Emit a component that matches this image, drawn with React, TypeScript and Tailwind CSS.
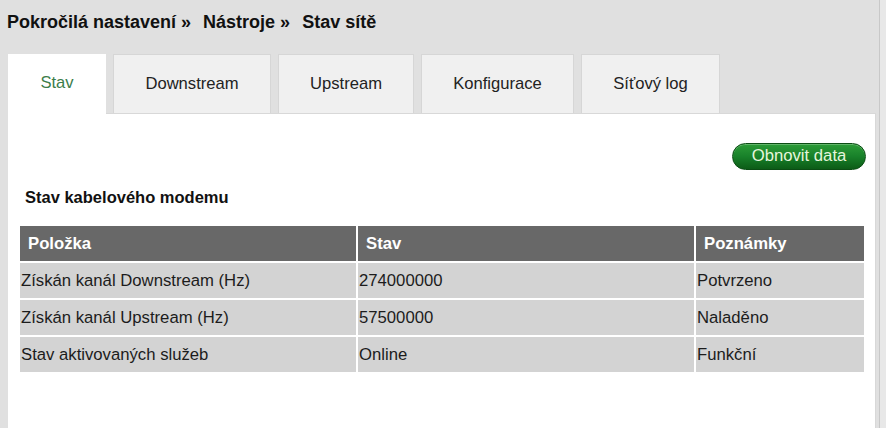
import React from "react"

const tabs = [
  { name: "Stav", width: "w-[98px]", active: true },
  { name: "Downstream", width: "w-[158px]" },
  { name: "Upstream", width: "w-[136px]" },
  { name: "Konfigurace", width: "w-[153px]" },
  { name: "Síťový log", width: "w-[139px]" },
]

const rows = [
  ["Získán kanál Downstream (Hz)", "274000000", "Potvrzeno"],
  ["Získán kanál Upstream (Hz)", "57500000", "Naladěno"],
  ["Stav aktivovaných služeb", "Online", "Funkční"],
]

export default function App() {
  return (
    <div className="flex h-[428px] w-[886px] overflow-hidden bg-[#e0e0e0] font-['Liberation_Sans',Arial,sans-serif] text-[#1a1a1a]">
      <div className="flex w-[879px] shrink-0 flex-col pl-2 pr-[3px]">
        <div className="flex h-[54px] items-start pt-[12px] -ml-px text-[18px] font-bold leading-[21px] text-[#111]">
          <span>Pokročilá nastavení »</span>
          <span className="ml-[12px]">Nástroje »</span>
          <span className="ml-[12px]">Stav sítě</span>
        </div>

        <div className="relative z-10 flex h-[59px] gap-[7px]">
          {tabs.map((tab) =>
            tab.active ? (
              <div
                key={tab.name}
                className={`${tab.width} flex h-[60px] items-center justify-center bg-white pb-px text-[16.6px] text-[#3b7d4a]`}
              >
                {tab.name}
              </div>
            ) : (
              <div
                key={tab.name}
                className={`${tab.width} flex h-[59px] items-center justify-center border border-b-0 border-[#d6d6d6] bg-[#f0f0f0] text-[16.6px] text-[#222]`}
              >
                {tab.name}
              </div>
            ),
          )}
        </div>

        <div className="flex-1 border-t border-r border-[#d8d8d8] bg-white pl-[10px] pr-[9px] pt-[29px]">
          <div className="flex justify-end">
            <button className="h-[27px] w-[134px] rounded-full border border-[#0b4d14] bg-gradient-to-b from-[#2c9c38] via-[#18812a] to-[#0c5c17] text-[16.7px] leading-none text-[#e6f6dc] shadow-[inset_0_1px_0_rgba(255,255,255,0.25)]">
              Obnovit data
            </button>
          </div>

          <div className="mt-[18px] pl-[7px] text-[16.5px] font-bold leading-[19px] text-[#111]">
            Stav kabelového modemu
          </div>

          <table className="mt-[17px] w-[848px] border-separate border-spacing-[2px] text-left text-[16.7px]">
            <thead>
              <tr className="h-[35px] bg-[#686868] text-white">
                <th className="w-[336px] px-2 font-bold">Položka</th>
                <th className="w-[336px] px-2 font-bold">Stav</th>
                <th className="px-2 font-bold">Poznámky</th>
              </tr>
            </thead>
            <tbody>
              {rows.map((row) => (
                <tr key={row[0]} className="h-[35px] bg-[#d3d3d3] text-[#1c1c1c]">
                  {row.map((cell, i) => (
                    <td key={i} className="px-px font-normal">
                      {cell}
                    </td>
                  ))}
                </tr>
              ))}
            </tbody>
          </table>
        </div>
      </div>
      <div className="w-px shrink-0 bg-[#c8c8c8]" />
      <div className="flex-1 bg-[#e8e8e8]" />
    </div>
  )
}
